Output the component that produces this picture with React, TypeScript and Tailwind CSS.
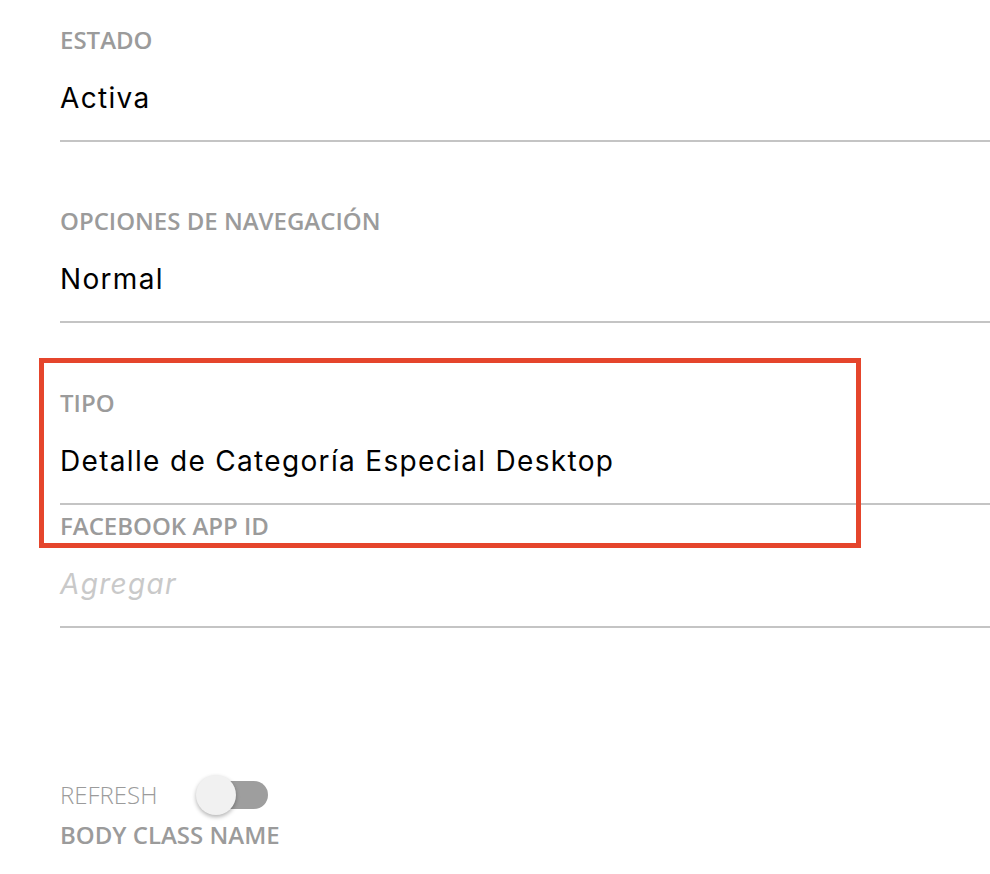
import React from "react";

const labelCls =
  "h-[32px] leading-[32px] text-[24px] font-semibold text-[#9b9b9b] whitespace-nowrap";
const valueCls =
  "mt-[24px] h-[36px] leading-[36px] text-[28px] tracking-[1.33px] text-black whitespace-nowrap";
const valueFont = { fontFamily: "Inter, 'Liberation Sans', sans-serif" };

function Field({
  label,
  value,
  placeholder,
  mt,
}: {
  label: string;
  value?: string;
  placeholder?: string;
  mt: string;
}) {
  return (
    <div className={`${mt} border-b-2 border-[#c4c4c4] pb-[24px]`}>
      <div className={labelCls}>{label}</div>
      {value ? (
        <div className={valueCls} style={valueFont}>
          {value}
        </div>
      ) : (
        <div
          className="mt-[24px] h-[36px] leading-[36px] text-[28px] tracking-[1.33px] italic text-[#c9c9c9] whitespace-nowrap"
          style={valueFont}
        >
          {placeholder}
        </div>
      )}
    </div>
  );
}

export default function App() {
  return (
    <div
      className="relative w-[990px] h-[874px] overflow-hidden bg-white pl-[60px]"
      style={{ fontFamily: "'Open Sans', 'Noto Sans', sans-serif" }}
    >
      <div className="pt-[24px]">
        <div className="border-b-2 border-[#c4c4c4] pb-[24px]">
          <div className={labelCls}>ESTADO</div>
          <div className={valueCls} style={valueFont}>
            Activa
          </div>
        </div>
        <Field mt="mt-[63px]" label="OPCIONES DE NAVEGACIÓN" value="Normal" />
        <Field mt="mt-[64px]" label="TIPO" value="Detalle de Categoría Especial Desktop" />
        <Field mt="mt-[5px]" label="FACEBOOK APP ID" placeholder="Agregar" />
      </div>

      <div className="mt-[147px] flex items-center h-[40px]">
        <span className="text-[24px] font-light text-[#9b9b9b] leading-[40px]">REFRESH</span>
        <div className="relative ml-[39px] w-[72px] h-[40px]">
          <div className="absolute left-[16px] top-[6px] w-[56px] h-[28px] rounded-full bg-[#9e9e9e]" />
          <div className="absolute left-0 top-0 w-[40px] h-[40px] rounded-full bg-[#f1f1f1] shadow-[0_2px_4px_rgba(0,0,0,0.3)]" />
        </div>
      </div>
      <div className="mt-[4px] h-[32px] leading-[32px] text-[24px] font-semibold text-[#9b9b9b] whitespace-nowrap">
        BODY CLASS NAME
      </div>

      <div className="absolute left-[39px] top-[358px] w-[822px] h-[190px] border-[5px] border-[#e5452c] pointer-events-none" />
    </div>
  );
}
